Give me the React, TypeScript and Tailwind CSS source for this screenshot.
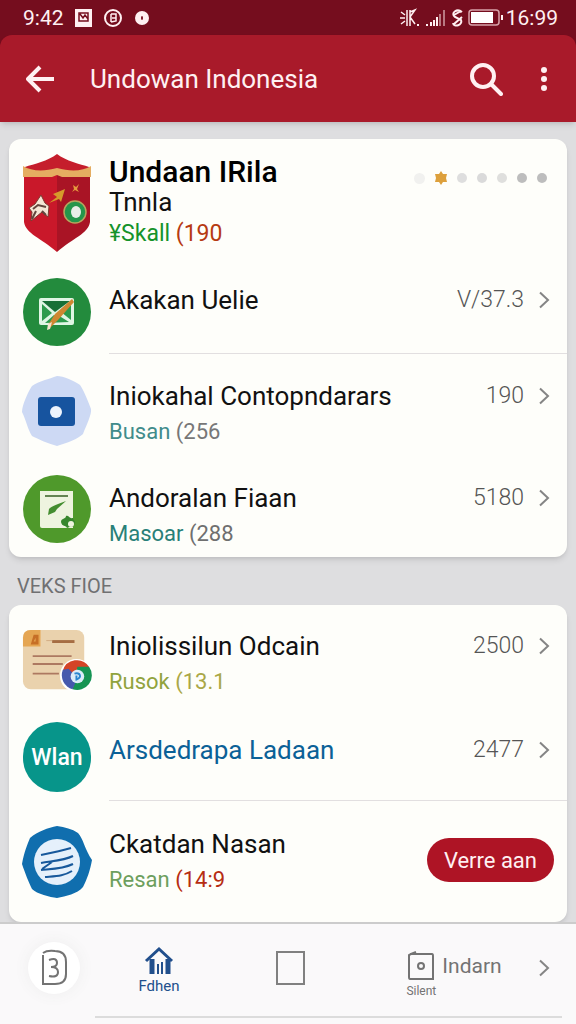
import React from "react";

type RowProps = {
  icon: React.ReactNode;
  title: string;
  titleColor?: string;
  value?: string;
  sub?: React.ReactNode;
  divider?: boolean;
  pad: string;
  textPad: string;
  action?: React.ReactNode;
};

const Chevron = () => (
  <svg className="h-[18px] w-[12px] shrink-0" viewBox="0 0 12 18" fill="none" stroke="#858585" strokeWidth="2">
    <path d="M2 1.500 10 9 2 16.500" />
  </svg>
);

const ShieldIcon = () => (
  <svg className="h-[98px] w-[68px]" viewBox="0 0 68 98">
    <path d="M1 18H34V98C18 84 3 80 1 68Z" fill="#c9182a" />
    <path d="M34 18H67V68C65 80 50 84 34 98Z" fill="#a91425" />
    <path d="M34 0C25 7 11 10 2 13V20H66V13C57 10 43 7 34 0Z" fill="#c51e2c" />
    <path d="M0 12C8 17 20 18 34 14 48 18 60 17 68 12V23H39L34 21 29 23H0Z" fill="#e5ad61" />
    <path d="M18 41 22 49 26 52 25 63 19 58 8 67 9 58 6 54 12 50Z" fill="#f4e6d6" stroke="#7b3a30" strokeWidth="1" />
    <path d="M10 55 15 51 23 53M9 65 13 57M19 57 23 61" fill="none" stroke="#62463e" strokeWidth="2" />
    <path d="M26 49 34 43 30 40 42 35 38 48 36 45Z" fill="#d69a2b" />
    <path d="M50 31 53 33 56 30 54 35 56 38 52 36 49 38 51 35Z" fill="#e59b3e" />
    <circle cx="52" cy="58" r="11" fill="#25964b" stroke="#b7a45e" strokeWidth="1.500" />
    <ellipse cx="53" cy="58" rx="5" ry="6" fill="#e9eee8" />
  </svg>
);

const MailIcon = () => (
  <svg className="h-[68px] w-[68px]" viewBox="0 0 68 68">
    <circle cx="34" cy="34" r="34" fill="#238b3d" />
    <rect x="16" y="20" width="35" height="27" rx="2" fill="#dff5e4" />
    <path d="M19 23H47L32 34Z" fill="#176f36" />
    <path d="M19 26 29 35 19 43ZM22 45 31 37 38 39 46 44ZM48 27V42L38 34Z" fill="#2c9a4c" />
    <path d="M25 47 32 36 49 21 51 24 35 42 26 51Z" fill="#cf8731" />
    <path d="M25 46 29 44 27 51 24 52Z" fill="#f4e4ce" />
  </svg>
);

const CashIcon = () => (
  <svg className="h-[70px] w-[70px]" viewBox="0 0 70 70">
    <path
      d="M35 0C41 0 53 5 58 9 61 13 65 22 69 33 70 38 64 50 61 58 56 63 45 67 35 70 27 68 16 63 10 60 6 54 4 44 0 36 0 29 6 16 10 10 17 5 27 3 35 0Z"
      fill="#cdd9f4"
    />
    <rect x="16" y="21" width="37" height="29" rx="3" fill="#17549f" />
    <circle cx="34" cy="36" r="6" fill="#eef4fd" />
  </svg>
);

const NoteIcon = () => (
  <svg className="h-[68px] w-[68px]" viewBox="0 0 68 68">
    <circle cx="34" cy="34" r="34" fill="#4f992b" />
    <path d="M17 16H50V53H19Q17 53 17 51Z" fill="#eef4df" />
    <path d="M22 21H45" stroke="#648452" strokeWidth="2" />
    <path d="M43 26C36 29 28 31 26 34L25 40 32 37 34 34Z" fill="#438d2f" />
    <path d="M38 47C38 43 43 44 43 41 46 40 46 44 50 43 50 46 54 46 51 49 52 53 47 51 44 53 43 50 39 52 38 47Z" fill="#37872d" />
    <circle cx="48" cy="49" r="3" fill="#eef4df" />
  </svg>
);

const DocumentIcon = () => (
  <svg className="h-[64px] w-[72px]" viewBox="0 0 72 64">
    <rect x="1" width="63" height="61" rx="8" fill="#ead2ad" />
    <path d="M1 8Q1 0 9 0H19V17H1Z" fill="#e5a653" />
    <path d="M9 15 12 5H17V15ZM12 12H14V8Z" fill="#c66f27" fillRule="evenodd" />
    <path d="M31 12H54" stroke="#a66d43" strokeWidth="3" />
    <path d="M25 11H31" stroke="#d2ac82" strokeWidth="1" />
    <path d="M11 27H51M11 35H42M11 45H38" stroke="#ad7961" strokeWidth="2" />
    <circle cx="56" cy="47" r="17" fill="#fff" />
    <path d="M42 42A15 15 0 0 1 69 38L56 41 49 48Z" fill="#d44427" />
    <path d="M57 38H69A15 15 0 0 1 52 61Z" fill="#169453" />
    <path d="M42 41A15 15 0 0 0 52 61L57 50 48 40Z" fill="#4659ad" />
    <circle cx="57" cy="48" r="7" fill="#dcecf8" />
    <path d="M54 45C60 43 62 49 56 51V47" fill="none" stroke="#2b86d0" strokeWidth="2" />
  </svg>
);

const WaveIcon = () => (
  <svg className="h-[72px] w-[70px]" viewBox="0 0 70 72">
    <path
      d="M35 0C43 1 50 3 56 7 61 12 63 24 70 34 68 45 65 53 61 61 55 68 44 70 35 72 28 71 15 68 10 63 7 57 3 47 0 38 2 27 5 19 8 12 16 5 26 2 35 0Z"
      fill="#106eae"
    />
    <circle cx="35" cy="36" r="23" fill="#e5f0fb" />
    <path
      d="M19 29C29 27 39 25 49 22M19 37C29 35 41 35 51 30M19 44C30 43 41 43 51 38M23 51C34 50 42 50 50 45M20 43 30 36"
      fill="none"
      stroke="#17589b"
      strokeWidth="2"
    />
  </svg>
);

const StatusBar = () => (
  <div className="flex h-[35px] items-center justify-between bg-[#750d1e] pl-[23px] pr-[18px] text-[21px] leading-[24px] text-[#fff0f2]">
    <div className="flex items-center">
      <span>9:42</span>
      <svg className="ml-[10px] h-[18px] w-[76px]" viewBox="0 0 76 18" fill="none">
        <rect x="1" width="17" height="18" fill="#fff0f2" />
        <path d="M5 4H14V12H5ZM6 5 9 9 11 6 14 10" stroke="#750d1e" strokeWidth="1.500" />
        <circle cx="39" cy="9" r="8" stroke="#fff0f2" strokeWidth="2" />
        <path d="M37 5V13M37 5H42V9H38M42 9V12L37 13" stroke="#fff0f2" strokeWidth="1.500" />
        <circle cx="68" cy="9" r="7" fill="#fff0f2" />
        <ellipse cx="68" cy="9" rx="1" ry="2" fill="#750d1e" />
      </svg>
    </div>
    <div className="flex items-center">
      <svg className="mr-[2px] h-[20px] w-[104px]" viewBox="0 0 104 20" fill="none" stroke="#fff0f2">
        <path d="M7 2V18M10 2V18M10 4 15 2 10 9 15 16M0 10H5M1 4 5 7M1 16 5 13" strokeWidth="1.500" />
        <path d="M17 17H19" strokeWidth="2" />
        <path d="M27 18V16M31 18V14M34 18V12M37 18V9" strokeWidth="2" />
        <path d="M40 18V6M44 18V2" stroke="#b97982" strokeWidth="2" />
        <path d="M62 4C57 0 50 5 55 9L61 12C63 17 54 20 53 15M54 7 61 3M54 16 62 9" strokeWidth="2" />
        <rect x="69" y="2" width="30" height="15" rx="3" stroke="#d7a3aa" strokeWidth="1.500" />
        <rect x="71" y="4" width="22" height="11" fill="#fff" stroke="none" />
        <path d="M102 7V12" strokeWidth="2" />
      </svg>
      <span>16:99</span>
    </div>
  </div>
);

const Row = ({ icon, title, titleColor = "text-[#111111]", value, sub, divider, pad, textPad, action }: RowProps) => (
  <li className="flex pl-[13px]">
    <div className={`flex w-[70px] shrink-0 justify-center ${pad}`}>{icon}</div>
    <div className={`ml-[17px] flex min-w-0 flex-1 pr-[17px] ${textPad} ${divider ? "border-b border-[#e2dfe0]" : ""}`}>
      <div className="min-w-0 flex-1">
        <div className="flex items-center justify-between">
          <h2 className={`whitespace-nowrap text-[26px] leading-[32px] ${titleColor}`}>{title}</h2>
          {value && (
            <a href="#" className="flex items-center gap-[14px] text-[23px] font-light leading-[32px] text-[#555555]">
              {value}
              <Chevron />
            </a>
          )}
        </div>
        {sub && <p className="mt-[8px] text-[22px] leading-[24px]">{sub}</p>}
      </div>
      {action}
    </div>
  </li>
);

const App = () => {
  return (
    <div className="flex min-h-screen flex-col bg-[#dedee0] font-[Roboto,'Liberation_Sans',sans-serif]">
      <header className="bg-[#750d1e]">
        <StatusBar />
        <div className="flex h-[87px] items-center rounded-t-xl bg-[#a91a2a] pl-[26px] pr-[28px] text-[#fff0f2] shadow-md">
          <button aria-label="Back">
            <svg className="h-[28px] w-[28px]" viewBox="0 0 28 28" fill="none" stroke="currentColor" strokeWidth="4">
              <path d="M28 14H3M14 2 2 14 14 26" strokeLinejoin="round" />
            </svg>
          </button>
          <h1 className="ml-[36px] flex-1 whitespace-nowrap text-[26px] leading-[32px]">Undowan Indonesia</h1>
          <button aria-label="Search">
            <svg className="h-[34px] w-[34px]" viewBox="0 0 34 34" fill="none" stroke="currentColor" strokeWidth="4">
              <circle cx="14" cy="14" r="11" />
              <path d="M22 22 32 32" strokeLinecap="round" />
            </svg>
          </button>
          <button aria-label="More" className="ml-[37px]">
            <svg className="h-[26px] w-[8px]" viewBox="0 0 8 26" fill="currentColor">
              <circle cx="4" cy="4" r="3" />
              <circle cx="4" cy="13" r="3" />
              <circle cx="4" cy="22" r="3" />
            </svg>
          </button>
        </div>
      </header>

      <main className="flex-1 px-[9px] pt-[17px]">
        <section className="rounded-xl bg-[#fefefa] pb-[11px] shadow-md">
          <div className="flex pl-[14px] pr-[20px] pt-[15px]">
            <ShieldIcon />
            <div className="ml-[18px] flex-1 pt-[2px]">
              <h2 className="text-[30px] font-medium leading-[32px] text-black">Undaan IRila</h2>
              <p className="text-[26px] leading-[29px] text-[#111111]">Tnnla</p>
              <p className="mt-[4px] text-[23px] leading-[26px] text-[#15932a]">
                ¥Skall <span className="text-[#b63a12]">(190</span>
              </p>
            </div>
            <div className="mt-[16px] flex h-[16px] items-center gap-[10px]">
              <span className="h-[11px] w-[11px] rounded-full bg-[#f1f1ef]" />
              <svg className="h-[14px] w-[12px]" viewBox="0 0 12 14" fill="#dda03c">
                <path d="M6 0 8 3 12 3 11 7 12 11 8 11 6 14 4 11 0 11 1 7 0 3 4 3Z" />
              </svg>
              <span className="h-[10px] w-[10px] rounded-full bg-[#dedede]" />
              <span className="h-[10px] w-[10px] rounded-full bg-[#dadada]" />
              <span className="h-[10px] w-[10px] rounded-full bg-[#dfdfdd]" />
              <span className="h-[10px] w-[10px] rounded-full bg-[#bdbdbd]" />
              <span className="h-[10px] w-[10px] rounded-full bg-[#bdbdbd]" />
            </div>
          </div>
          <ul className="pt-[13px]">
            <Row icon={<MailIcon />} title="Akakan Uelie" value="V/37.3" divider pad="pt-[13px] pb-[8px]" textPad="pt-[19px]" />
            <Row
              icon={<CashIcon />}
              title="Iniokahal Contopndarars"
              value="190"
              sub={<><span className="text-[#418c8b]">Busan</span> <span className="text-[#777777]">(256</span></>}
              pad="pt-[22px] pb-[15px]"
              textPad="pt-[26px]"
            />
            <Row
              icon={<NoteIcon />}
              title="Andoralan Fiaan"
              value="5180"
              sub={<><span className="text-[#298078]">Masoar</span> <span className="text-[#6f6f6f]">(288</span></>}
              pad="pt-[14px]"
              textPad="pt-[21px]"
            />
          </ul>
        </section>

        <h3 className="flex h-[48px] items-center pl-[8px] pt-[10px] text-[20px] text-[#707072]">VEKS FIOE</h3>

        <section className="rounded-xl bg-[#fefefa] pb-[24px] shadow-md">
          <ul>
            <Row
              icon={<DocumentIcon />}
              title="Iniolissilun Odcain"
              value="2500"
              sub={<><span className="text-[#91a33d]">Rusok</span> <span className="text-[#aaa747]">(13.1</span></>}
              pad="pt-[24px]"
              textPad="pt-[25px]"
            />
            <Row
              icon={
                <div className="flex h-[70px] w-[68px] items-center justify-center rounded-full bg-[#07958a] pt-[3px] text-[23px] font-medium text-white">
                  Wlan
                </div>
              }
              title="Arsdedrapa Ladaan"
              titleColor="text-[#0b6197]"
              value="2477"
              divider
              pad="pt-[28px] pb-[9px]"
              textPad="pt-[40px]"
            />
            <Row
              icon={<WaveIcon />}
              title="Ckatdan Nasan"
              sub={<><span className="text-[#6d9f5d]">Resan</span> <span className="text-[#b62d12]">(14:9</span></>}
              pad="pt-[25px]"
              textPad="pt-[27px]"
              action={
                <button className="-mr-[4px] mt-[10px] h-[44px] shrink-0 rounded-full bg-[#ae1425] px-[17px] text-[22px] text-[#fff0f2]">
                  Verre aan
                </button>
              }
            />
          </ul>
        </section>
      </main>

      <nav className="border-t-2 border-[#cccccc] bg-[#faf9fa] pb-[6px]">
        <div className="grid h-[92px] grid-cols-[108fr_102fr_160fr_166fr_40fr] items-center justify-items-center pb-[4px] text-[#737373]">
          <button aria-label="B" className="flex h-[52px] w-[52px] items-center justify-center rounded-full bg-white shadow-[0_0_16px_#eeeeee]">
            <svg className="h-[38px] w-[26px]" viewBox="0 0 26 38" fill="none" stroke="currentColor" strokeWidth="2">
              <path d="M2 6V35H14Q25 35 25 25V13Q25 2 14 2 6 1 2 4M8 11Q16 8 16 14 16 18 10 18 17 18 17 23 17 29 8 27" />
            </svg>
          </button>
          <button className="flex flex-col items-center pt-[5px] text-[15px] leading-[20px] text-[#214f8c]">
            <svg className="h-[30px] w-[30px]" viewBox="0 0 30 30" fill="none" stroke="currentColor">
              <path d="M2 15 15 3 28 15" strokeWidth="3" />
              <path d="M8 13V28M24 13V28" strokeWidth="5" />
              <path d="M14 18V28M18 16V28" strokeWidth="2" />
            </svg>
            Fdhen
          </button>
          <button aria-label="Recent">
            <span className="block h-[34px] w-[29px] border-2 border-[#808080]" />
          </button>
          <button className="grid grid-cols-[34px_auto] items-center justify-items-center gap-y-[2px] pt-[14px]">
            <svg className="h-[30px] w-[26px]" viewBox="0 0 26 30" fill="none" stroke="currentColor" strokeWidth="2">
              <path d="M2 3H24Q25 3 25 5V28H2Q1 28 1 26V4L3 3 8 1" />
              <circle cx="13" cy="15" r="3" />
            </svg>
            <span className="ml-[4px] text-[21px] leading-[30px]">Indarn</span>
            <span className="text-[12px] leading-[16px]">Silent</span>
          </button>
          <button aria-label="Next" className="justify-self-start pl-[2px]">
            <Chevron />
          </button>
        </div>
        <div className="ml-[95px] mr-[14px] border-t-2 border-[#dcdcdc]" />
      </nav>
    </div>
  );
};

export default App;
